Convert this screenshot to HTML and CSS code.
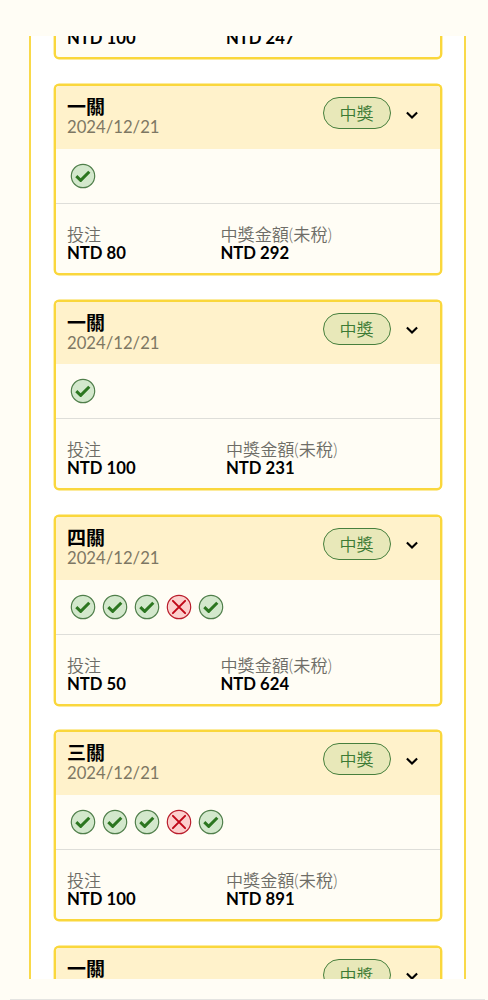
FILE: index.html
```
<!DOCTYPE html>
<html lang="zh-Hant">

<head>
    <meta charset="UTF-8">
    <meta name="viewport" content="width=device-width, initial-scale=1.0">
    <title>投注紀錄</title>
    <link rel="stylesheet" href="styles.css">
</head>

<body>
    <svg class="sprite">
        <symbol id="win" viewBox="0 0 26 26">
            <circle cx="13" cy="13" r="11.7" fill="#d3e8cc" stroke="#4f7e4a" stroke-width="1.2" />
            <path d="M6.3 13.2l4.4 4.2 8.6-8.7" fill="none" stroke="#2c7620" stroke-width="3" stroke-linejoin="round" />
        </symbol>
        <symbol id="lose" viewBox="0 0 26 26">
            <circle cx="13" cy="13" r="11.7" fill="#fcd0cd" stroke="#b91c2b" stroke-width="1.2" />
            <path d="M6.9 6.9l12.2 12.2M19.1 6.9L6.9 19.1" fill="none" stroke="#c00717" stroke-width="2" stroke-linecap="round" />
        </symbol>
        <symbol id="arrow" viewBox="0 0 14 10">
            <path d="M1.9 2.5L7 7.6l5.1-5.1" fill="none" stroke="#000" stroke-width="2.1" />
        </symbol>
    </svg>

    <div class="list">
        <div class="card first">
            <div class="foot wide">
                <div><p>投注</p><b>NTD 100</b></div>
                <div><p>中獎金額(未稅)</p><b>NTD 247</b></div>
            </div>
        </div>

        <div class="card">
            <div class="head">
                <div class="title"><h3>一關</h3><span>2024/12/21</span></div>
                <div class="tag">中獎</div>
                <svg class="arrow"><use href="#arrow" /></svg>
            </div>
            <div class="result">
                <svg><use href="#win" /></svg>
            </div>
            <div class="foot">
                <div><p>投注</p><b>NTD 80</b></div>
                <div><p>中獎金額(未稅)</p><b>NTD 292</b></div>
            </div>
        </div>

        <div class="card">
            <div class="head">
                <div class="title"><h3>一關</h3><span>2024/12/21</span></div>
                <div class="tag">中獎</div>
                <svg class="arrow"><use href="#arrow" /></svg>
            </div>
            <div class="result">
                <svg><use href="#win" /></svg>
            </div>
            <div class="foot wide">
                <div><p>投注</p><b>NTD 100</b></div>
                <div><p>中獎金額(未稅)</p><b>NTD 231</b></div>
            </div>
        </div>

        <div class="card">
            <div class="head">
                <div class="title"><h3>四關</h3><span>2024/12/21</span></div>
                <div class="tag">中獎</div>
                <svg class="arrow"><use href="#arrow" /></svg>
            </div>
            <div class="result">
                <svg><use href="#win" /></svg>
                <svg><use href="#win" /></svg>
                <svg><use href="#win" /></svg>
                <svg><use href="#lose" /></svg>
                <svg><use href="#win" /></svg>
            </div>
            <div class="foot">
                <div><p>投注</p><b>NTD 50</b></div>
                <div><p>中獎金額(未稅)</p><b>NTD 624</b></div>
            </div>
        </div>

        <div class="card">
            <div class="head">
                <div class="title"><h3>三關</h3><span>2024/12/21</span></div>
                <div class="tag">中獎</div>
                <svg class="arrow"><use href="#arrow" /></svg>
            </div>
            <div class="result">
                <svg><use href="#win" /></svg>
                <svg><use href="#win" /></svg>
                <svg><use href="#win" /></svg>
                <svg><use href="#lose" /></svg>
                <svg><use href="#win" /></svg>
            </div>
            <div class="foot wide">
                <div><p>投注</p><b>NTD 100</b></div>
                <div><p>中獎金額(未稅)</p><b>NTD 891</b></div>
            </div>
        </div>

        <div class="card">
            <div class="head">
                <div class="title"><h3>一關</h3><span>2024/12/21</span></div>
                <div class="tag">中獎</div>
                <svg class="arrow"><use href="#arrow" /></svg>
            </div>
        </div>
    </div>
    <div class="line"></div>
</body>

</html>
```

FILE: styles.css
```
* {
    padding: 0;
    margin: 0;
    box-sizing: border-box;
}

body {
    height: 1000px;
    overflow: hidden;
    padding-top: 36px;
    background-color: #fffdf5;
    font-family: Lato, "Noto Sans CJK TC", sans-serif;
    font-size: 16.7px;
    color: #000;
}

.sprite {
    display: none;
}

.list {
    width: 437px;
    height: 943px;
    margin-left: 29px;
    padding: 0 22.5px;
    overflow: hidden;
    background-color: #fff;
    border-left: 2px solid #f9d949;
    border-right: 2px solid #f9d949;
}

.card {
    width: 388px;
    height: 190.6px;
    margin-bottom: 24.8px;
    overflow: hidden;
    background-color: #fffdf5;
    border: 2px solid #fad73c;
    border-radius: 5px;
    box-shadow: 0 0 0 .4px #fad73c;
}

/* 第一張只露出底部 */
.card.first {
    height: 74px;
    margin-top: -50.6px;
}

.card.first .foot {
    padding-top: 23px;
}

.head {
    display: flex;
    height: 62.6px;
    padding: 10px 20.5px 0 11.5px;
    background-color: #fff2cb;
}

.title {
    flex: 1;
}

.title h3 {
    height: 21px;
    line-height: 21px;
    font-size: 19px;
}

.title span {
    display: block;
    line-height: 20px;
    color: #7d7763;
}

.tag {
    width: 68px;
    height: 32px;
    margin-top: 1px;
    line-height: 31px;
    text-align: center;
    font-size: 17px;
    font-weight: 350;
    color: #3c7a34;
    background-color: #e8e8b9;
    border: 1px solid #477f3d;
    border-radius: 16px;
}

.arrow {
    width: 14px;
    height: 10px;
    margin: 13.5px 0 0 14.5px;
}

.result {
    display: flex;
    gap: 6.1px;
    height: 55px;
    padding: 14px 14.3px 0;
    border-bottom: 1px solid #deded9;
}

.result svg {
    width: 26px;
    height: 26px;
}

.foot {
    display: grid;
    grid-template-columns: 153.5px 1fr;
    padding: 21px 11.5px 0;
}

.foot.wide {
    grid-template-columns: 159px 1fr;
}

.foot p {
    height: 19px;
    line-height: 19px;
    font-size: 17.1px;
    font-weight: 350;
    color: #6e6d67;
}

.foot b {
    display: block;
    line-height: 18px;
}

.line {
    height: 1px;
    margin: 20px 3px 0 10px;
    background-color: #e4e4e1;
}
```
